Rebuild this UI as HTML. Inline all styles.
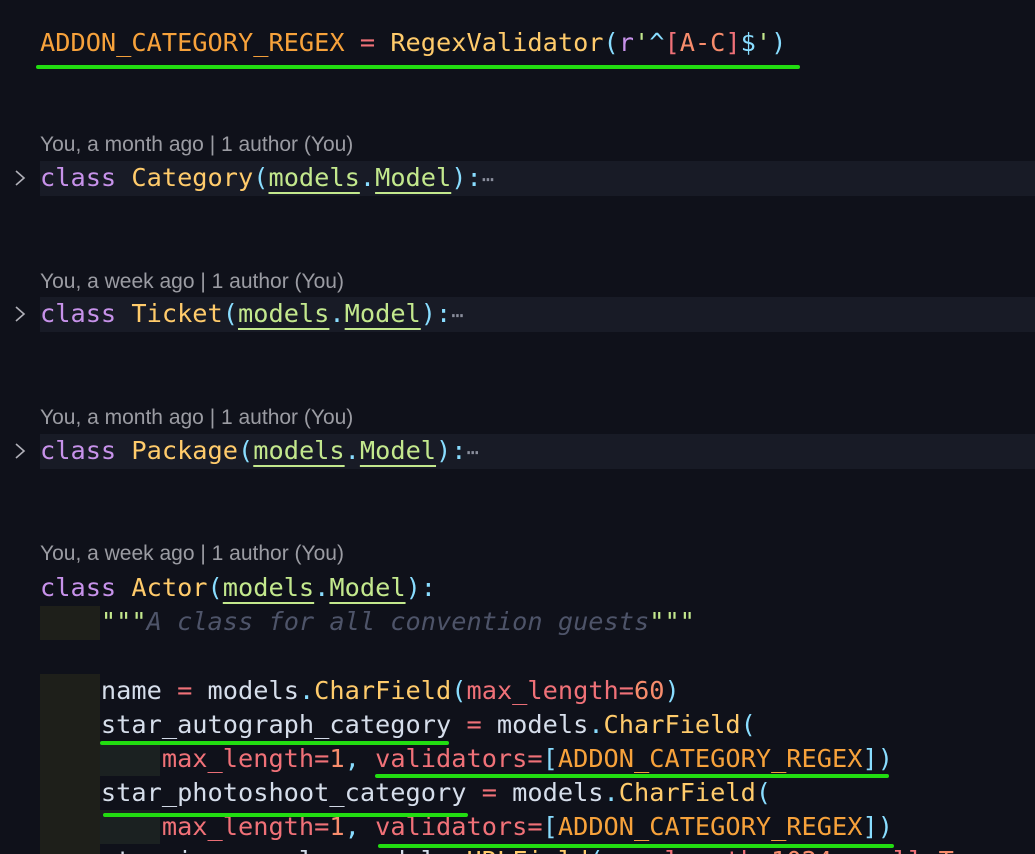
<!DOCTYPE html>
<html><head><meta charset="utf-8"><style>
html,body{margin:0;padding:0;width:1035px;height:854px;overflow:hidden;}
body{background:#0f111a;position:relative;}
.l{position:absolute;left:40px;height:34px;line-height:34px;font-family:"DejaVu Sans Mono","Liberation Mono",monospace;font-size:25.3px;white-space:pre;color:#d6deeb;}
.c{position:absolute;left:40px;font-family:"Liberation Sans",sans-serif;font-size:21px;color:#9b9ca3;height:24px;line-height:24px;white-space:pre;}
.band{position:absolute;left:40px;right:0;height:35px;background:#181b26;}
.g{position:absolute;height:4px;background:#22dd11;border-radius:2px;}
.blk{position:absolute;background:#1e1f1a;}
.blk2{position:absolute;background:#1b2121;}
.chev{position:absolute;left:13px;}
.k{color:#c792ea}.y{color:#ffcb6b}.p{color:#89ddff}.gr{color:#c3e88d}.r{color:#f07178}.o{color:#f7a23b}.n{color:#f78c6c}.cm{color:#4e5469;font-style:italic}.w{color:#d6deeb}
.u{text-decoration:underline;text-decoration-color:#c3e88d;text-decoration-thickness:2px;text-underline-offset:6px;}
.dots{color:#8a8e9c;font-size:20px;}
</style></head><body>

<div class="l" style="top:26px"><span class="o">ADDON_CATEGORY_REGEX</span> <span class="r">=</span> <span class="y">RegexValidator</span><span class="p">(</span><span class="k">r</span><span class="gr">'</span><span class="p">^</span><span class="r">[</span><span class="n">A-C</span><span class="r">]</span><span class="p">$</span><span class="gr">'</span><span class="p">)</span></div>
<div class="g" style="left:36px;top:65px;width:764px"></div>

<div class="c" style="top:133px">You, a month ago | 1 author (You)</div>
<div class="band" style="top:161px"></div>
<svg class="chev" style="top:169px" width="14" height="18"><path d="M3 2 L11 9 L3 16" stroke="#b0b0b8" stroke-width="1.6" fill="none"/></svg>
<div class="l" style="top:161px"><span class="k">class</span> <span class="y">Category</span><span class="p">(</span><span class="gr u">models</span><span class="p">.</span><span class="gr u">Model</span><span class="p">):</span><span class="dots">⋯</span></div>

<div class="c" style="top:270px">You, a week ago | 1 author (You)</div>
<div class="band" style="top:297px"></div>
<svg class="chev" style="top:305px" width="14" height="18"><path d="M3 2 L11 9 L3 16" stroke="#b0b0b8" stroke-width="1.6" fill="none"/></svg>
<div class="l" style="top:297px"><span class="k">class</span> <span class="y">Ticket</span><span class="p">(</span><span class="gr u">models</span><span class="p">.</span><span class="gr u">Model</span><span class="p">):</span><span class="dots">⋯</span></div>

<div class="c" style="top:406px">You, a month ago | 1 author (You)</div>
<div class="band" style="top:434px"></div>
<svg class="chev" style="top:442px" width="14" height="18"><path d="M3 2 L11 9 L3 16" stroke="#b0b0b8" stroke-width="1.6" fill="none"/></svg>
<div class="l" style="top:434px"><span class="k">class</span> <span class="y">Package</span><span class="p">(</span><span class="gr u">models</span><span class="p">.</span><span class="gr u">Model</span><span class="p">):</span><span class="dots">⋯</span></div>

<div class="c" style="top:542px">You, a week ago | 1 author (You)</div>
<div class="l" style="top:571px"><span class="k">class</span> <span class="y">Actor</span><span class="p">(</span><span class="gr u">models</span><span class="p">.</span><span class="gr u">Model</span><span class="p">):</span></div>

<div class="blk" style="left:40px;top:606px;width:60px;height:34px"></div>
<div class="blk" style="left:40px;top:674px;width:60px;height:180px"></div>
<div class="blk2" style="left:100px;top:742px;width:60px;height:34px"></div>
<div class="blk2" style="left:100px;top:810px;width:60px;height:34px"></div>

<div class="l" style="top:605px">    <span class="gr">"""</span><span class="cm">A class for all convention guests</span><span class="gr">"""</span></div>
<div class="l" style="top:674px">    <span class="w">name</span> <span class="r">=</span> <span class="w">models</span><span class="p">.</span><span class="y">CharField</span><span class="p">(</span><span class="r">max_length</span><span class="r">=</span><span class="n">60</span><span class="p">)</span></div>
<div class="l" style="top:708px">    <span class="w">star_autograph_category</span> <span class="r">=</span> <span class="w">models</span><span class="p">.</span><span class="y">CharField</span><span class="p">(</span></div>
<div class="l" style="top:742px">        <span class="r">max_length</span><span class="r">=</span><span class="n">1</span><span class="p">,</span> <span class="r">validators=</span><span class="p">[</span><span class="o">ADDON_CATEGORY_REGEX</span><span class="p">])</span></div>
<div class="l" style="top:776px">    <span class="w">star_photoshoot_category</span> <span class="r">=</span> <span class="w">models</span><span class="p">.</span><span class="y">CharField</span><span class="p">(</span></div>
<div class="l" style="top:810px">        <span class="r">max_length</span><span class="r">=</span><span class="n">1</span><span class="p">,</span> <span class="r">validators=</span><span class="p">[</span><span class="o">ADDON_CATEGORY_REGEX</span><span class="p">])</span></div>
<div class="l" style="top:844px">    <span class="w">star_image_url</span> <span class="r">=</span> <span class="w">models</span><span class="p">.</span><span class="y">URLField</span><span class="p">(</span><span class="r">max_length</span><span class="r">=</span><span class="n">1024</span><span class="p">,</span> <span class="r">null</span><span class="r">=</span><span class="n">True</span><span class="p">,</span></div>

<div class="g" style="left:100px;top:741px;width:349px"></div>
<div class="g" style="left:375px;top:774px;width:514px"></div>
<div class="g" style="left:103px;top:813px;width:365px"></div>
<div class="g" style="left:378px;top:844px;width:516px"></div>
</body></html>
